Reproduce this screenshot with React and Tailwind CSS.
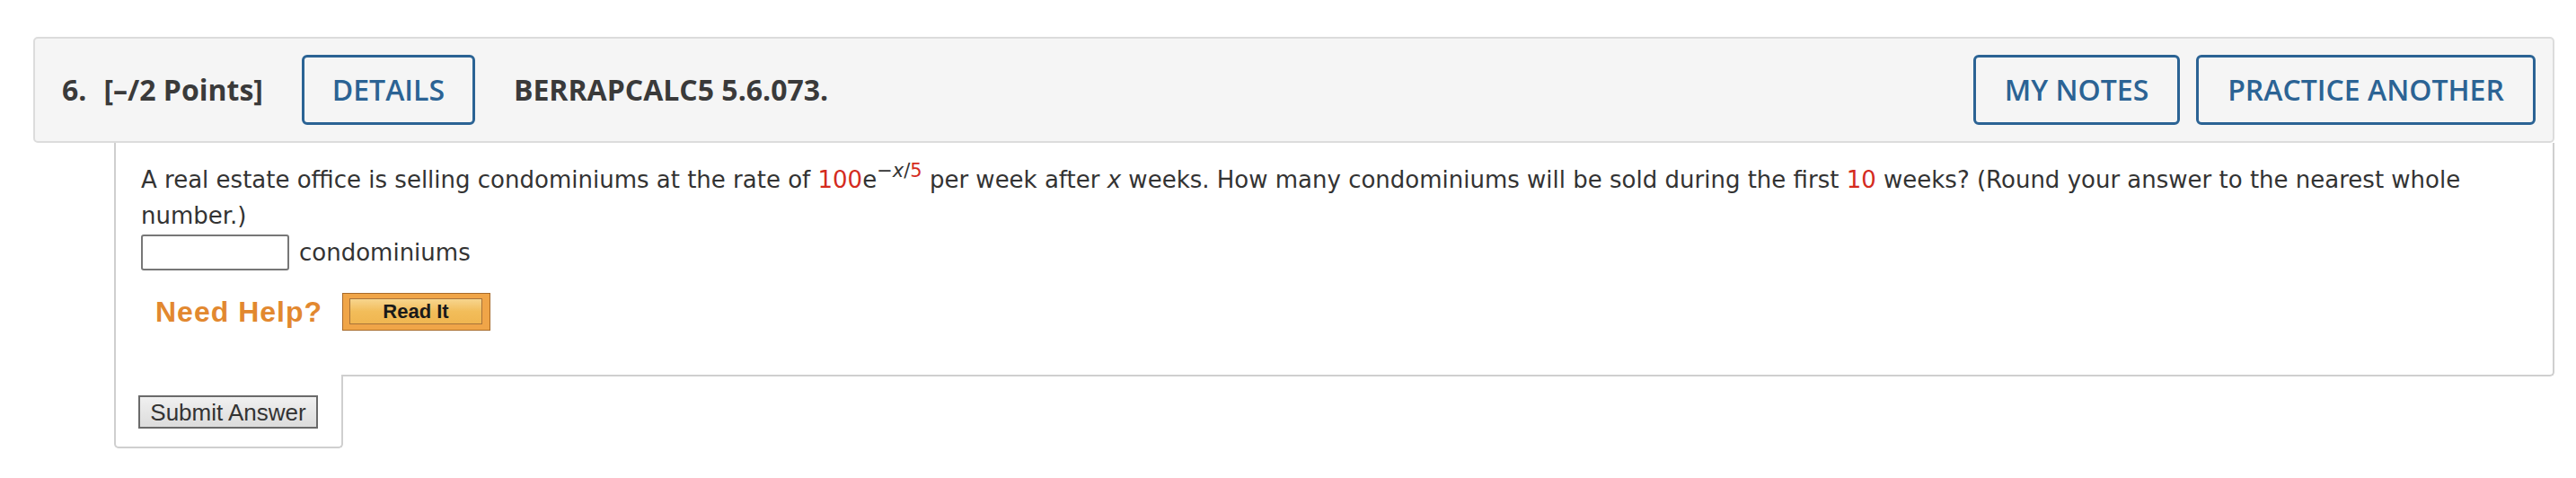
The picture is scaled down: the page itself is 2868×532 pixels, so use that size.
export default function App() {
  const red = "text-[#d42b1e]";
  const btn =
    "shrink-0 h-[78px] border-[3px] border-[#2b6394] rounded-[6px] text-[#2b6394] text-[32px] font-semibold bg-transparent";
  return (
    <div className="w-[2868px] h-[532px] bg-white pt-[41px] pl-[37px]">
      {/* question header */}
      <div className="w-[2807px] h-[118px] flex items-center bg-[#f5f5f5] border-2 border-[#dcdcdc] rounded-[5px] pl-[30px] pr-[19px] text-[#3a3a3a] font-['Open_Sans',sans-serif]">
        <span className="text-[32px] font-bold">6.</span>
        <span className="text-[32px] font-bold ml-[19px]">[–/2 Points]</span>
        <button className={`${btn} ml-[43px] w-[193px]`}>DETAILS</button>
        <span className="ml-[43px] text-[32px] font-bold">BERRAPCALC5 5.6.073.</span>
        <div className="ml-auto flex gap-[18px]">
          <button className={`${btn} w-[230px]`}>MY NOTES</button>
          <button className={`${btn} w-[378px]`}>PRACTICE ANOTHER</button>
        </div>
      </div>

      {/* question body */}
      <div className="ml-[90px] w-[2717px]">
        <div className="h-[260px] border-x-2 border-b-2 border-[#cfcfcf] rounded-br-[5px] pl-[28px] pt-[21px] pr-[30px] text-[#333] font-['DejaVu_Sans',Verdana,sans-serif] text-[26px] leading-[40px]">
          <div>
            A real estate office is selling condominiums at the rate of{" "}
            <span className={red}>100</span>e
            <sup className="text-[21px] -top-[12px]">
              −<i>x</i>/<span className={red}>5</span>
            </sup>{" "}
            per week after <i>x</i> weeks. How many condominiums will be sold during the first{" "}
            <span className={red}>10</span> weeks? (Round your answer to the nearest whole number.)
          </div>
          <div className="flex items-center mt-[1px]">
            <input className="w-[165px] h-[40px] border-2 border-[#777] rounded-[3px] bg-white" />
            <span className="ml-[11px]">condominiums</span>
          </div>
          <div className="flex items-center mt-[25px] ml-[16px]">
            <span className="font-['Liberation_Sans',Arial,sans-serif] font-bold text-[32px] tracking-[1px] text-[#e2882f]">
              Need Help?
            </span>
            <button className="ml-[22px] w-[165px] h-[42px] border border-[#a86a2a] bg-[#f0a548] p-[5px_8px_6px_7px]">
              <div className="h-full border border-[#a8733a] bg-gradient-to-b from-[#f7d58d] via-[#f2bd5a] to-[#f0b650] flex items-center justify-center font-['Liberation_Sans',Arial,sans-serif] font-bold text-[22px] text-[#1a1a1a] leading-none">
                Read It
              </div>
            </button>
          </div>
        </div>
        <div className="relative -mt-[2px] w-[255px] h-[82px] bg-white border-x-2 border-b-2 border-[#cfcfcf] rounded-b-[5px] pl-[25px] pt-[23px]">
          <button className="w-[200px] h-[37px] border-2 border-[#6a6a6a] bg-gradient-to-b from-[#f0f0f0] to-[#dcdcdc] font-['Liberation_Sans',Arial,sans-serif] text-[26px] text-[#333] leading-none">
            Submit Answer
          </button>
        </div>
      </div>
    </div>
  );
}
